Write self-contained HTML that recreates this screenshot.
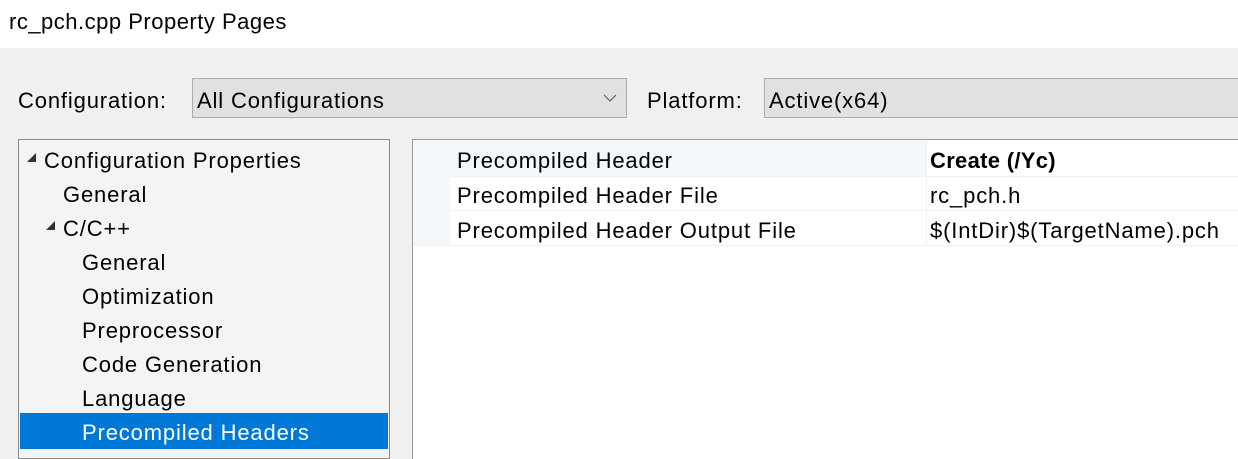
<!DOCTYPE html>
<html><head><style>
*{margin:0;padding:0;box-sizing:border-box}
body{width:1238px;height:449px;overflow:hidden;background:#f0f0f0;font-family:"Liberation Sans",sans-serif;font-size:22px;letter-spacing:0.85px;color:#000;position:relative}
.a{position:absolute;white-space:nowrap}
</style></head><body>
<div class="a" style="left:0;top:0;width:1238px;height:48px;background:#fff"></div>
<div class="a" style="left:9px;top:9px;letter-spacing:0.5px">rc_pch.cpp Property Pages</div>
<div class="a" style="left:18px;top:88px">Configuration:</div>
<div class="a" style="left:192px;top:78px;width:435px;height:40px;background:#e1e1e1;border:1px solid #adadad"></div>
<div class="a" style="left:197px;top:88px">All Configurations</div>
<svg class="a" style="left:603px;top:93px" width="14" height="10"><path d="M1 2 L7 8 L13 2" fill="none" stroke="#555" stroke-width="1"/></svg>
<div class="a" style="left:647px;top:88px">Platform:</div>
<div class="a" style="left:764px;top:78px;width:480px;height:40px;background:#e1e1e1;border:1px solid #adadad"></div>
<div class="a" style="left:769px;top:88px">Active(x64)</div>
<div class="a" style="left:18px;top:139px;width:372px;height:320px;background:#f4f4f4;border:1px solid #8a8a8a"></div>
<svg class="a" style="left:26px;top:152px" width="12" height="12"><path d="M10 1 L10 10 L1 10Z" fill="#333"/></svg>
<div class="a" style="left:44px;top:148px">Configuration Properties</div>
<div class="a" style="left:63px;top:182px">General</div>
<svg class="a" style="left:45px;top:220px" width="12" height="12"><path d="M10 1 L10 10 L1 10Z" fill="#333"/></svg>
<div class="a" style="left:63px;top:216px">C/C++</div>
<div class="a" style="left:82px;top:250px">General</div>
<div class="a" style="left:82px;top:284px">Optimization</div>
<div class="a" style="left:82px;top:318px">Preprocessor</div>
<div class="a" style="left:82px;top:352px">Code Generation</div>
<div class="a" style="left:82px;top:386px">Language</div>
<div class="a" style="left:20px;top:413px;width:368px;height:36px;background:#0078d7"></div>
<div class="a" style="left:82px;top:420px;color:#fff">Precompiled Headers</div>
<div class="a" style="left:412px;top:139px;width:830px;height:320px;background:#fff;border-left:1px solid #9a9a9a;border-top:1px solid #9a9a9a"></div>
<div class="a" style="left:413px;top:140px;width:37px;height:105px;background:#f3f6fb"></div>
<div class="a" style="left:450px;top:140px;width:476px;height:36px;background:#f3f6fb"></div>
<div class="a" style="left:450px;top:176px;width:800px;height:1px;background:#eef0f3"></div>
<div class="a" style="left:450px;top:210px;width:800px;height:1px;background:#eef0f3"></div>
<div class="a" style="left:413px;top:245px;width:830px;height:1px;background:#eef0f3"></div>
<div class="a" style="left:926px;top:140px;width:1px;height:105px;background:#eef0f3"></div>
<div class="a" style="left:457px;top:148px">Precompiled Header</div>
<div class="a" style="left:930px;top:148px;font-weight:bold;letter-spacing:0.3px">Create (/Yc)</div>
<div class="a" style="left:457px;top:183px">Precompiled Header File</div>
<div class="a" style="left:930px;top:183px">rc_pch.h</div>
<div class="a" style="left:457px;top:218px">Precompiled Header Output File</div>
<div class="a" style="left:930px;top:218px">$(IntDir)$(TargetName).pch</div>
</body></html>
